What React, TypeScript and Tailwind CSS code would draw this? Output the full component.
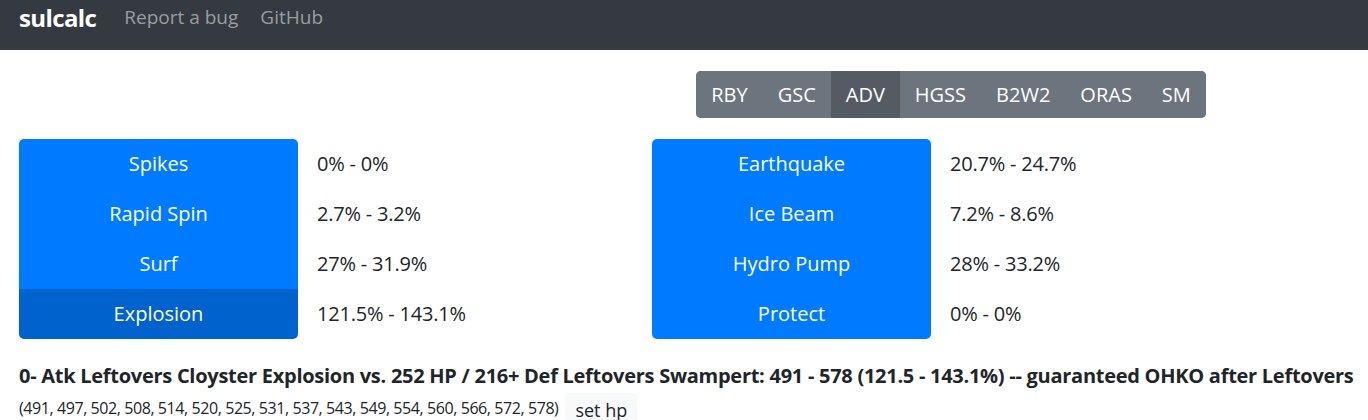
const gens = ["RBY", "GSC", "ADV", "HGSS", "B2W2", "ORAS", "SM"];

const left = [
  { name: "Spikes", dmg: "0% - 0%" },
  { name: "Rapid Spin", dmg: "2.7% - 3.2%" },
  { name: "Surf", dmg: "27% - 31.9%" },
  { name: "Explosion", dmg: "121.5% - 143.1%", active: true },
];

const right = [
  { name: "Earthquake", dmg: "20.7% - 24.7%" },
  { name: "Ice Beam", dmg: "7.2% - 8.6%" },
  { name: "Hydro Pump", dmg: "28% - 33.2%" },
  { name: "Protect", dmg: "0% - 0%" },
];

type Move = { name: string; dmg: string; active?: boolean };

function MoveList({ moves }: { moves: Move[] }) {
  return (
    <div className="flex">
      <div className="w-[279px] flex flex-col rounded-[5px] overflow-hidden">
        {moves.map((m) => (
          <button
            key={m.name}
            className={`h-[50px] text-white text-[20px] text-center ${
              m.active ? "bg-[#0062cc]" : "bg-[#007bff]"
            }`}
          >
            {m.name}
          </button>
        ))}
      </div>
      <div className="flex flex-col pl-[19px]">
        {moves.map((m) => (
          <div key={m.name} className="h-[50px] flex items-center text-[20px] text-[#212529] tracking-[-0.2px]">
            {m.dmg}
          </div>
        ))}
      </div>
    </div>
  );
}

export default function App() {
  return (
    <div className="min-h-screen bg-white" style={{ fontFamily: '"Open Sans", "Noto Sans", sans-serif' }}>
      <nav className="h-[50px] bg-[#343a40] flex items-center pl-[19px] pb-[15px]">
        <span className="text-[24px] font-bold text-white tracking-[-0.6px]">sulcalc</span>
        <a className="ml-[28px] text-[19px] text-[#9a9da0]">Report a bug</a>
        <a className="ml-[22px] text-[19px] text-[#9a9da0]">GitHub</a>
      </nav>

      <div className="flex">
        <div className="w-[634px]" />
        <div className="w-[634px] flex justify-center pt-[21px]">
          <div className="flex h-[47px] rounded-[5px] overflow-hidden bg-[#6c757d]">
            {gens.map((g) => (
              <button
                key={g}
                className={`px-[15px] text-[20px] text-white ${
                  g === "ADV" ? "bg-[#545b62]" : "bg-[#6c757d]"
                }`}
              >
                {g}
              </button>
            ))}
          </div>
        </div>
      </div>

      <div className="flex pt-[21px]">
        <div className="w-[634px] pl-[19px]">
          <MoveList moves={left} />
        </div>
        <div className="w-[634px] pl-[18px]">
          <MoveList moves={right} />
        </div>
      </div>

      <div className="pl-[19px] pt-[22px]">
        <div className="text-[20px] font-bold text-[#212529] leading-[30px] whitespace-nowrap tracking-[-0.27px]">
          0- Atk Leftovers Cloyster Explosion vs. 252 HP / 216+ Def Leftovers Swampert: 491 - 578 (121.5 - 143.1%) -- guaranteed OHKO after Leftovers
        </div>
        <div className="flex items-start mt-[2px] h-[30px]">
          <span className="text-[16px] text-[#212529] leading-[30px] tracking-[-0.42px]">
            (491, 497, 502, 508, 514, 520, 525, 531, 537, 543, 549, 554, 560, 566, 572, 578)
          </span>
          <button className="ml-[7px] h-[36px] px-[10px] bg-[#f8f9fa] text-[18px] text-[#212529] rounded-[4px] leading-[28px] pb-[2px]">
            set hp
          </button>
        </div>
      </div>
    </div>
  );
}
